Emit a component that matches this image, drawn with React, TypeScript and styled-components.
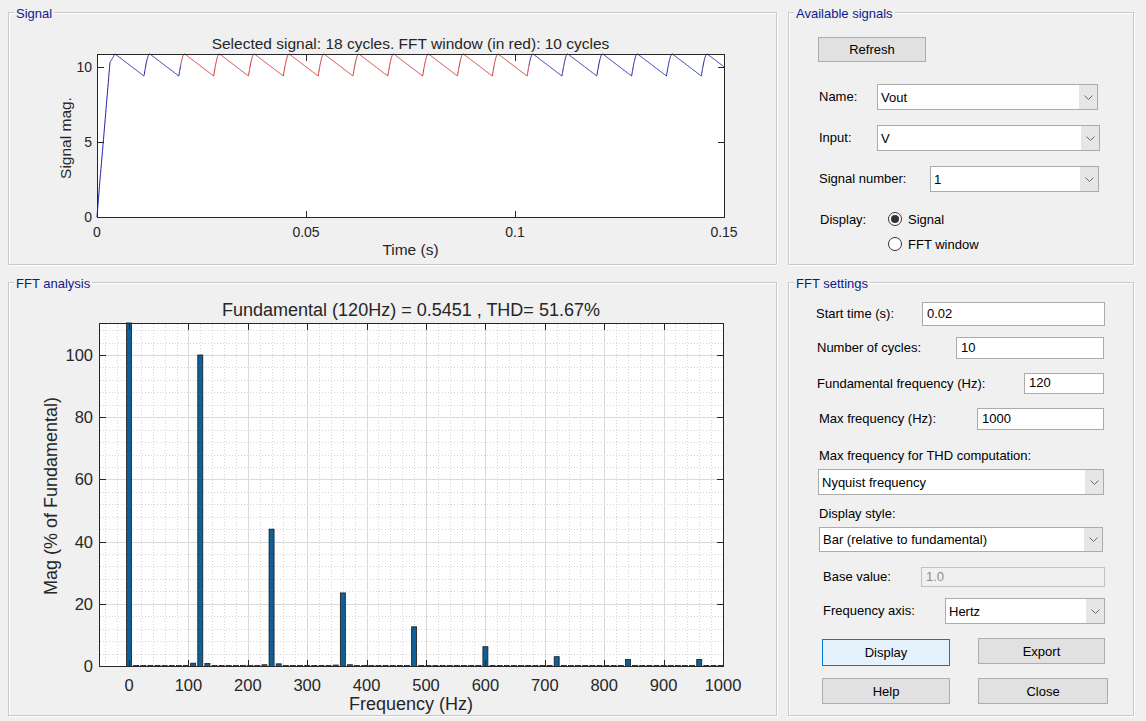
import React from 'react'
import styled, { createGlobalStyle } from 'styled-components'

const GlobalStyle = createGlobalStyle`
    html, body {
        margin: 0;
        padding: 0;
        background: #f0f0f0;
    }
    body {
        font-family: 'Liberation Sans', Arial, sans-serif;
        font-size: 13px;
        color: #000;
    }
`

const Window = styled.div`
    display: grid;
    grid-template-columns: 769px 346px;
    grid-template-rows: 253px 434px;
    column-gap: 11px;
    row-gap: 17px;
    width: 1146px;
    height: 721px;
    padding: 12px 0 0 8px;
    box-sizing: border-box;
`

const Panel = styled.section`
    position: relative;
    border: 1px solid #c9c9c9;
    box-shadow: inset 1px 1px 0 #fff, 1px 1px 0 #fff;
    box-sizing: border-box;
`

const PanelTitle = styled.span`
    position: absolute;
    top: -7px;
    left: 5px;
    padding: 0 2px;
    background: #f0f0f0;
    color: #0e1a8c;
    font-size: 13px;
    line-height: 15px;
    z-index: 1;
`

const ChartSvg = styled.svg`
    display: block;
    font-family: 'Liberation Sans', Arial, sans-serif;
`

const AxisText = styled.text<{ $size: number }>`
    font-size: ${(p) => p.$size}px;
    fill: #262626;
`

// Form bits on the right side
const Stack = styled.div<{ $pl: number }>`
    display: flex;
    flex-direction: column;
    align-items: flex-start;
    padding-left: ${(p) => p.$pl}px;
`

const Row = styled.div<{ $mt: number; $top?: boolean }>`
    display: flex;
    align-items: ${(p) => (p.$top ? 'flex-start' : 'center')};
    margin-top: ${(p) => p.$mt}px;
`

const Label = styled.span<{ $w?: number; $ml?: number; $mt?: number }>`
    flex: none;
    width: ${(p) => (p.$w ? `${p.$w}px` : 'auto')};
    margin-left: ${(p) => p.$ml ?? 0}px;
    margin-top: ${(p) => p.$mt ?? 0}px;
    line-height: 16px;
    white-space: nowrap;
`

const Button = styled.button<{ $w: number; $h: number; $mt?: number; $focus?: boolean }>`
    width: ${(p) => p.$w}px;
    height: ${(p) => p.$h}px;
    margin-top: ${(p) => p.$mt ?? 0}px;
    padding: 0;
    font-family: inherit;
    font-size: 13px;
    color: #000;
    background: ${(p) => (p.$focus ? '#e5f1fb' : '#e1e1e1')};
    border: 1px solid ${(p) => (p.$focus ? '#0078d7' : '#adadad')};
    box-sizing: border-box;
`

const ButtonRow = styled.div<{ $mt: number }>`
    display: flex;
    align-items: flex-start;
    gap: 28px;
    margin-top: ${(p) => p.$mt}px;
    margin-left: 6px;
`

const Edit = styled.div<{ $w: number; $h: number; $disabled?: boolean }>`
    display: flex;
    align-items: center;
    width: ${(p) => p.$w}px;
    height: ${(p) => p.$h}px;
    padding: 0 0 2px 4px;
    box-sizing: border-box;
    background: ${(p) => (p.$disabled ? '#f0f0f0' : '#fff')};
    border: 1px solid ${(p) => (p.$disabled ? '#c2c2c2' : '#ababab')};
    color: ${(p) => (p.$disabled ? '#8c8c8c' : '#000')};
`

const Combo = styled.div<{ $w: number; $h: number; $ml?: number; $mt?: number }>`
    display: flex;
    width: ${(p) => p.$w}px;
    height: ${(p) => p.$h}px;
    margin-left: ${(p) => p.$ml ?? 0}px;
    margin-top: ${(p) => p.$mt ?? 0}px;
    box-sizing: border-box;
    background: #fff;
    border: 1px solid #ababab;
`

const ComboValue = styled.span`
    flex: 1;
    display: flex;
    align-items: center;
    padding-left: 3px;
`

const ComboArrow = styled.span`
    flex: none;
    width: 18px;
    display: flex;
    align-items: center;
    justify-content: center;
    background: #e6e6e6;
`

const RadioGroup = styled.div`
    display: flex;
    flex-direction: column;
    gap: 5px;
`

const RadioOption = styled.label`
    display: flex;
    align-items: center;
    gap: 6px;
    height: 20px;
`

const RadioDot = styled.span<{ $checked: boolean }>`
    display: flex;
    align-items: center;
    justify-content: center;
    width: 14px;
    height: 14px;
    border-radius: 50%;
    border: 1px solid #333;
    background: #fff;
    box-sizing: border-box;

    &::after {
        content: '';
        width: 8px;
        height: 8px;
        border-radius: 50%;
        background: ${(p) => (p.$checked ? '#333' : 'transparent')};
    }
`

const Select: React.FC<{ w: number; h: number; value: string; ml?: number; mt?: number }> = ({ w, h, value, ml, mt }) => (
    <Combo $w={w} $h={h} $ml={ml} $mt={mt}>
        <ComboValue>{value}</ComboValue>
        <ComboArrow>
            <svg width="9" height="5" viewBox="0 0 9 5">
                <polyline points="0.5,0.5 4.5,4.5 8.5,0.5" fill="none" stroke="#6a6a6a" strokeWidth="1" />
            </svg>
        </ComboArrow>
    </Combo>
)

/* ---------------- signal plot ---------------- */

const sx = (t: number) => 97 + (t / 0.15) * 627
const sy = (v: number) => 217 - v * 15

const PERIOD = 1 / 120
const PEAK = 10.87
const VALLEY = 9.4
const T0 = 0.0043
const RISE = 0.0014
const startup: [number, number][] = [
    [0, 0],
    [0.0006, 2.1],
    [0.0015, 5],
    [0.0031, 10.3],
    [0.0043, PEAK],
]

const signalAt = (t: number) => {
    if (t <= T0) {
        for (let i = 1; i < startup.length; i++) {
            const [ta, va] = startup[i - 1]
            const [tb, vb] = startup[i]
            if (t <= tb) return va + ((vb - va) * (t - ta)) / (tb - ta)
        }
    }
    const ph = (t - T0) % PERIOD
    const fall = PERIOD - RISE
    if (ph < fall) return PEAK - ((PEAK - VALLEY) * ph) / fall
    const r = (ph - fall) / RISE
    return VALLEY + (PEAK - VALLEY) * Math.sin((r * Math.PI) / 2)
}

const trace = (a: number, b: number) => {
    const pts: string[] = []
    for (let t = a; t < b; t += 0.00005) pts.push(`${sx(t).toFixed(2)},${sy(signalAt(t)).toFixed(2)}`)
    pts.push(`${sx(b).toFixed(2)},${sy(signalAt(b)).toFixed(2)}`)
    return pts.join(' ')
}

const FFT_START = 0.02
const FFT_END = 0.02 + 10 / 120

const SignalPlot = () => (
    <ChartSvg width={767} height={251} viewBox="9 13 767 251">
        <AxisText $size={15.5} x={410.5} y={49} textAnchor="middle">
            Selected signal: 18 cycles. FFT window (in red): 10 cycles
        </AxisText>
        <rect x={97.5} y={54.5} width={627} height={163} fill="#fff" />
        <polyline points={trace(0, FFT_START)} fill="none" stroke="#1c1ca6" strokeWidth={1} />
        <polyline points={trace(FFT_START, FFT_END)} fill="none" stroke="#d42a2a" strokeWidth={1} />
        <polyline points={trace(FFT_END, 0.15)} fill="none" stroke="#1c1ca6" strokeWidth={1} />
        <rect x={97.5} y={54.5} width={627} height={163} fill="none" stroke="#262626" />
        {[0.05, 0.1].map((t) => (
            <g key={t} stroke="#262626">
                <line x1={Math.round(sx(t)) + 0.5} x2={Math.round(sx(t)) + 0.5} y1={217} y2={211} />
                <line x1={Math.round(sx(t)) + 0.5} x2={Math.round(sx(t)) + 0.5} y1={55} y2={61} />
            </g>
        ))}
        {[5, 10].map((v) => (
            <g key={v} stroke="#262626">
                <line x1={98} x2={104} y1={Math.round(sy(v)) + 0.5} y2={Math.round(sy(v)) + 0.5} />
                <line x1={724} x2={718} y1={Math.round(sy(v)) + 0.5} y2={Math.round(sy(v)) + 0.5} />
            </g>
        ))}
        {[
            ['0', 0],
            ['0.05', 0.05],
            ['0.1', 0.1],
            ['0.15', 0.15],
        ].map(([label, t]) => (
            <AxisText key={label} $size={14} x={sx(t as number)} y={237} textAnchor="middle">
                {label}
            </AxisText>
        ))}
        {[0, 5, 10].map((v) => (
            <AxisText key={v} $size={14} x={92} y={sy(v) + 5} textAnchor="end">
                {v}
            </AxisText>
        ))}
        <AxisText $size={15.5} x={410.5} y={255} textAnchor="middle">
            Time (s)
        </AxisText>
        <AxisText $size={15.5} x={0} y={0} textAnchor="middle" transform="translate(71 138) rotate(-90)">
            Signal mag.
        </AxisText>
    </ChartSvg>
)

/* ---------------- FFT plot ---------------- */

const fx = (f: number) => 129 + f * 0.594
const fy = (v: number) => 666 - v * 3.11

const harmonics: Record<number, number> = {
    0: 120,
    108: 0.9,
    120: 100,
    132: 0.8,
    228: 0.4,
    240: 44,
    252: 0.7,
    348: 0.3,
    360: 23.5,
    372: 0.4,
    480: 12.6,
    600: 6.2,
    720: 3,
    840: 2.1,
    960: 2.1,
}

const bins = Array.from({ length: 84 }, (_, i) => i * 12)
const minorX = Array.from({ length: 52 }, (_, i) => -40 + i * 20).filter((f) => f % 100 !== 0)
const minorY = Array.from({ length: 27 }, (_, i) => 4 + i * 4).filter((v) => v % 20 !== 0)
const majorX = [0, 100, 200, 300, 400, 500, 600, 700, 800, 900, 1000]
const majorY = [0, 20, 40, 60, 80, 100]

const FftPlot = () => (
    <ChartSvg width={767} height={432} viewBox="9 283 767 432">
        <AxisText $size={18} x={411} y={316} textAnchor="middle">
            Fundamental (120Hz) = 0.5451 , THD= 51.67%
        </AxisText>
        <rect x={99.5} y={323.5} width={624} height={343} fill="#fff" />
        <g stroke="#d4d4d4" strokeDasharray="1 2" strokeWidth={1}>
            {minorX.map((f) => (
                <line key={f} x1={Math.round(fx(f)) + 0.5} x2={Math.round(fx(f)) + 0.5} y1={324} y2={666} />
            ))}
            {minorY.map((v) => (
                <line key={v} x1={100} x2={723} y1={Math.round(fy(v)) + 0.5} y2={Math.round(fy(v)) + 0.5} />
            ))}
        </g>
        <g stroke="#dadada" strokeWidth={1}>
            {majorX.slice(0, -1).map((f) => (
                <line key={f} x1={Math.round(fx(f)) + 0.5} x2={Math.round(fx(f)) + 0.5} y1={324} y2={666} />
            ))}
            {majorY.slice(1).map((v) => (
                <line key={v} x1={100} x2={723} y1={Math.round(fy(v)) + 0.5} y2={Math.round(fy(v)) + 0.5} />
            ))}
        </g>
        <g fill="#0f5f98" stroke="#1a1a1a" strokeWidth={0.8}>
            {bins.map((f) => {
                const v = Math.min(harmonics[f] ?? 0.15, 110.3)
                const top = fy(v)
                return <rect key={f} x={fx(f) - 2.5} y={top} width={5} height={666.5 - top} />
            })}
        </g>
        <rect x={99.5} y={323.5} width={624} height={343} fill="none" stroke="#262626" />
        <g stroke="#262626">
            {majorX.slice(0, -1).map((f) => (
                <g key={f}>
                    <line x1={Math.round(fx(f)) + 0.5} x2={Math.round(fx(f)) + 0.5} y1={666} y2={660} />
                    <line x1={Math.round(fx(f)) + 0.5} x2={Math.round(fx(f)) + 0.5} y1={324} y2={330} />
                </g>
            ))}
            {majorY.slice(1).map((v) => (
                <g key={v}>
                    <line x1={100} x2={106} y1={Math.round(fy(v)) + 0.5} y2={Math.round(fy(v)) + 0.5} />
                    <line x1={723} x2={717} y1={Math.round(fy(v)) + 0.5} y2={Math.round(fy(v)) + 0.5} />
                </g>
            ))}
        </g>
        {majorX.map((f) => (
            <AxisText key={f} $size={16.5} x={fx(f)} y={691} textAnchor="middle">
                {f}
            </AxisText>
        ))}
        {majorY.map((v) => (
            <AxisText key={v} $size={16.5} x={93} y={fy(v) + 6} textAnchor="end">
                {v}
            </AxisText>
        ))}
        <AxisText $size={18} x={411} y={710} textAnchor="middle">
            Frequency (Hz)
        </AxisText>
        <AxisText $size={18} x={0} y={0} textAnchor="middle" transform="translate(57 496) rotate(-90)">
            Mag (% of Fundamental)
        </AxisText>
    </ChartSvg>
)

export default function App() {
    return (
        <>
            <GlobalStyle />
            <Window>
                <Panel>
                    <PanelTitle>Signal</PanelTitle>
                    <SignalPlot />
                </Panel>

                <Panel>
                    <PanelTitle>Available signals</PanelTitle>
                    <Stack $pl={29}>
                        <Button $w={108} $h={25} $mt={24}>
                            Refresh
                        </Button>
                        <Row $mt={22}>
                            <Label $w={58} $ml={1}>
                                Name:
                            </Label>
                            <Select w={221} h={26} value="Vout" />
                        </Row>
                        <Row $mt={15}>
                            <Label $w={58} $ml={1}>
                                Input:
                            </Label>
                            <Select w={223} h={26} value="V" />
                        </Row>
                        <Row $mt={15}>
                            <Label $w={111} $ml={1}>
                                Signal number:
                            </Label>
                            <Select w={169} h={26} value="1" />
                        </Row>
                        <Row $mt={17} $top>
                            <Label $w={68} $ml={2} $mt={3}>
                                Display:
                            </Label>
                            <RadioGroup>
                                <RadioOption>
                                    <RadioDot $checked />
                                    Signal
                                </RadioOption>
                                <RadioOption>
                                    <RadioDot $checked={false} />
                                    FFT window
                                </RadioOption>
                            </RadioGroup>
                        </Row>
                    </Stack>
                </Panel>

                <Panel>
                    <PanelTitle>FFT analysis</PanelTitle>
                    <FftPlot />
                </Panel>

                <Panel>
                    <PanelTitle>FFT settings</PanelTitle>
                    <Stack $pl={27}>
                        <Row $mt={19}>
                            <Label $w={106}>Start time (s):</Label>
                            <Edit $w={183} $h={24}>0.02</Edit>
                        </Row>
                        <Row $mt={11}>
                            <Label $w={139} $ml={1}>
                                Number of cycles:
                            </Label>
                            <Edit $w={148} $h={22}>10</Edit>
                        </Row>
                        <Row $mt={14}>
                            <Label $w={207} $ml={1}>
                                Fundamental frequency (Hz):
                            </Label>
                            <Edit $w={80} $h={21}>120</Edit>
                        </Row>
                        <Row $mt={14}>
                            <Label $w={158} $ml={3}>
                                Max frequency (Hz):
                            </Label>
                            <Edit $w={127} $h={22}>1000</Edit>
                        </Row>
                        <Label $ml={3} $mt={18}>
                            Max frequency for THD computation:
                        </Label>
                        <Select w={286} h={26} ml={2} mt={5} value="Nyquist frequency" />
                        <Label $ml={3} $mt={11}>
                            Display style:
                        </Label>
                        <Select w={284} h={25} ml={3} mt={5} value="Bar (relative to fundamental)" />
                        <Row $mt={15}>
                            <Label $w={98} $ml={7}>
                                Base value:
                            </Label>
                            <Edit $w={184} $h={20} $disabled>
                                1.0
                            </Edit>
                        </Row>
                        <Row $mt={11}>
                            <Label $w={122} $ml={7}>
                                Frequency axis:
                            </Label>
                            <Select w={160} h={26} value="Hertz" />
                        </Row>
                        <ButtonRow $mt={14}>
                            <Button $w={128} $h={27} $mt={1} $focus>
                                Display
                            </Button>
                            <Button $w={127} $h={26}>
                                Export
                            </Button>
                        </ButtonRow>
                        <ButtonRow $mt={12}>
                            <Button $w={128} $h={26}>
                                Help
                            </Button>
                            <Button $w={130} $h={26}>
                                Close
                            </Button>
                        </ButtonRow>
                    </Stack>
                </Panel>
            </Window>
        </>
    )
}
